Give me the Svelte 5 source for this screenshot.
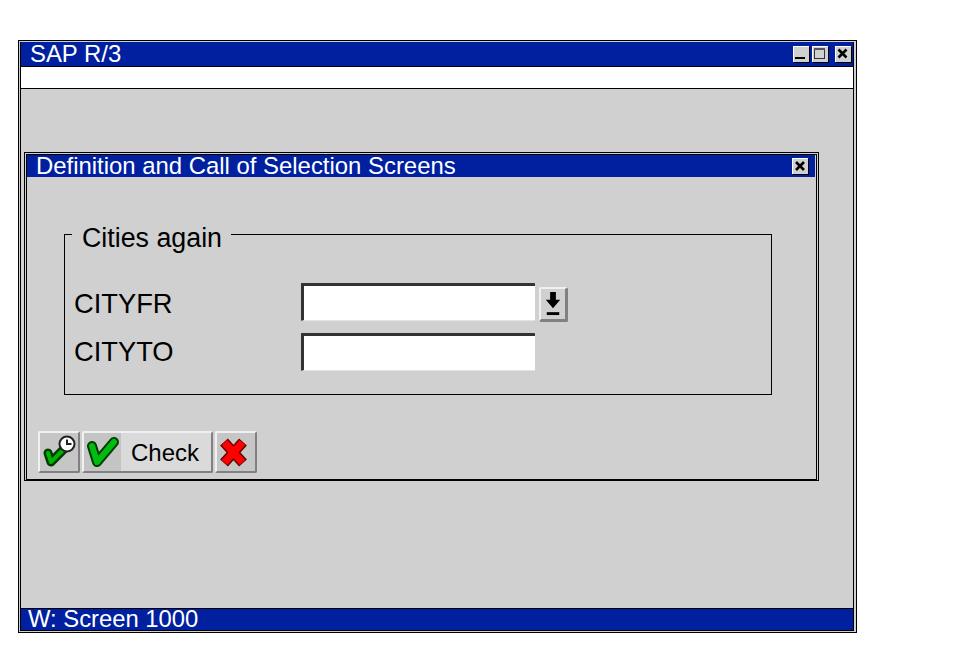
<script>
  const fields = [
    { label: 'CITYFR', help: true },
    { label: 'CITYTO', help: false }
  ];
</script>

<div class="page">
  <div class="window">
    <div class="inner">
      <header class="titlebar">
        <span class="title">SAP R/3</span>
        <div class="controls">
          <span class="ctl"><svg viewBox="0 0 16 16" width="16" height="16"><rect x="2" y="11" width="10" height="2" fill="#000"/></svg></span>
          <span class="ctl"><svg viewBox="0 0 16 16" width="16" height="16"><rect x="2.500" y="3.500" width="10" height="9" fill="none" stroke="#333"/><rect x="2" y="2" width="11" height="2" fill="#555"/></svg></span>
          <span class="ctl far"><svg viewBox="0 0 16 16" width="16" height="16"><path d="M3.500 3.500l8 8M11.500 3.500l-8 8" stroke="#000" stroke-width="2.600" fill="none"/></svg></span>
        </div>
      </header>
      <div class="toolbar"></div>
      <main class="desk">
        <section class="dialog">
          <div class="dialog-inner">
            <header class="dlg-title">
              <span>Definition and Call of Selection Screens</span>
              <span class="ctl close"><svg viewBox="0 0 16 16" width="16" height="16"><path d="M4 4l8 8M12 4l-8 8" stroke="#000" stroke-width="2.600" fill="none"/></svg></span>
            </header>
            <fieldset class="group">
              <legend>Cities again</legend>
              {#each fields as f}
                <div class="row" class:first={f.help}>
                  <label for={f.label}>{f.label}</label>
                  <input id={f.label} type="text" />
                  {#if f.help}
                    <button class="btn help" aria-label="Possible values">
                      <svg viewBox="0 0 25 31" width="24" height="30"><path d="M9.500 3h6v8h4.500l-7.500 9-7.500-9h4.500z" fill="#000"/><rect x="6" y="24" width="13" height="3" fill="#000"/></svg>
                    </button>
                  {/if}
                </div>
              {/each}
            </fieldset>
            <div class="actions">
              <button class="btn icon" aria-label="Check with clock">
                <svg viewBox="0 0 38 38" width="38" height="38">
                  <path d="M8 20l3 9 14-14" fill="none" stroke="#003c00" stroke-width="9" stroke-linecap="round" stroke-linejoin="round"/>
                  <path d="M8 20l3 9 14-14" fill="none" stroke="#00b400" stroke-width="4" stroke-linecap="round" stroke-linejoin="round"/>
                  <circle cx="27" cy="11" r="7.500" fill="#fff" stroke="#222" stroke-width="2"/>
                  <path d="M27 6.500V11h4.500" fill="none" stroke="#222" stroke-width="2"/>
                </svg>
              </button>
              <button class="btn check">
                <span class="chk">
                  <svg viewBox="0 0 37 38" width="37" height="38">
                    <path d="M8 13l5 16L30 9" fill="none" stroke="#003c00" stroke-width="10" stroke-linecap="round" stroke-linejoin="round"/>
                    <path d="M8 13l5 16L30 9" fill="none" stroke="#00bc10" stroke-width="6" stroke-linecap="round" stroke-linejoin="round"/>
                  </svg>
                </span>
                <span class="chk-label">Check</span>
              </button>
              <button class="btn icon" aria-label="Cancel">
                <svg viewBox="0 0 38 38" width="38" height="38">
                  <path d="M7 9l19 21M26 9L7 30" fill="none" stroke="#600" stroke-width="10.500"/>
                  <path d="M7.500 9.500l18 20M25.500 9.500l-18 20" fill="none" stroke="#f00" stroke-width="7.500"/>
                </svg>
              </button>
            </div>
          </div>
        </section>
      </main>
      <footer class="status">W: Screen 1000</footer>
    </div>
  </div>
</div>

<style>
  :global(body) { margin: 0; background: #fff; }
  .page {
    width: 960px; height: 672px; box-sizing: border-box;
    padding: 40px 0 0 18px;
    font-family: "Liberation Sans", Arial, sans-serif;
  }
  .window {
    width: 839px; height: 593px; box-sizing: border-box;
    border: 1px solid #000; padding: 1px 2px 1px 1px; background: #d0d0d0;
  }
  .inner {
    height: 100%; box-sizing: border-box; border: 1px solid #000; border-top: 0;
    display: flex; flex-direction: column; background: #d0d0d0;
  }
  .titlebar {
    height: 25px; box-sizing: border-box; background: #00209f; border-bottom: 1px solid #000;
    display: flex; align-items: center; justify-content: space-between;
    color: #fff; font-size: 23.900px; padding: 0 2px 0 9px; flex: none;
  }
  .title { line-height: 24px; }
  .controls { display: flex; gap: 3px; }
  .ctl {
    width: 16px; height: 16px; background: #d0d0d0; display: block; box-sizing: border-box;
    box-shadow: inset 1px 1px 0 #fff, 1px 1px 0 #000;
  }
  .far { margin-left: 4px; }
  .ctl svg { display: block; }
  .toolbar { height: 22px; box-sizing: border-box; background: #fff; border-bottom: 1px solid #000; flex: none; }
  .desk { flex: 1; padding: 63px 0 0 3px; min-height: 0; }
  .status {
    height: 22px; box-sizing: border-box; background: #00209f; color: #fff; border-top: 1px solid #000;
    font-size: 23.800px; line-height: 20px; padding-left: 7px; flex: none;
  }
  .dialog {
    width: 795px; height: 329px; box-sizing: border-box;
    border: 1px solid #000; padding: 1px 1px 0 1px; background: #d0d0d0;
  }
  .dialog-inner { height: 100%; box-sizing: border-box; border: 1px solid #000; display: flex; flex-direction: column; }
  .dlg-title {
    height: 22px; background: #00209f; color: #fff; font-size: 23.900px; flex: none;
    display: flex; align-items: center; justify-content: space-between; padding: 0 7px 0 9px;
    line-height: 22px; margin-right: 1px;
  }
  .group {
    margin: 38px 0 0 37px; width: 708px; height: 180px; box-sizing: border-box;
    border: 1px solid #000; padding: 30px 0 0 9px; min-inline-size: 0; flex: none;
  }
  legend {
    font-size: 26.800px; padding: 8px 9px 0 10px; margin-left: -2px; color: #000; line-height: 30px;
  }
  .row { display: flex; align-items: flex-start; height: 50px; }
  label { width: 227px; font-size: 27.300px; color: #000; line-height: 39px; flex: none; margin-top: -1px; }
  .first label { margin-top: 1px; }
  input {
    width: 234px; height: 38px; box-sizing: border-box; background: #fff; margin: 0; padding: 0;
    border: 0; border-top: 3px solid #333; border-left: 3px solid #333; border-radius: 1px;
    border-bottom: 1px solid #e4e4e4; outline: none;
  }
  .btn {
    background: #d0d0d0; border: 0; padding: 0; margin: 0; font-family: inherit; display: flex;
    align-items: center; justify-content: center; box-sizing: border-box; border-radius: 2px;
    border-top: 2px solid #f0f0f0; border-left: 2px solid #f0f0f0;
    border-right: 2px solid #808080; border-bottom: 2px solid #808080;
  }
  .help { width: 29px; height: 35px; margin: 4px 0 0 4px; border-right-width: 3px; border-bottom-width: 3px; }
  .actions { display: flex; gap: 2px; margin: 36px 0 0 11px; }
  .icon { width: 42px; height: 42px; background: #c6c6c6; }
  .check { width: 131px; height: 42px; justify-content: flex-start; background: #dadada; }
  .chk { width: 37px; height: 38px; background: #c4c4c4; display: flex; align-items: center; justify-content: center; flex: none; }
  .chk-label { font-size: 24px; line-height: 40px; padding-top: 2px; color: #000; margin-left: 10px; }
</style>
